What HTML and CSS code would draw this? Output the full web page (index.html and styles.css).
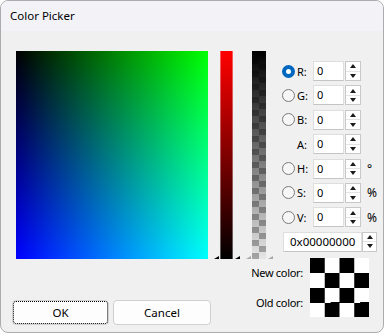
FILE: index.html
```html
<!DOCTYPE html>
<html lang="en">
<head>
    <meta charset="UTF-8">
    <title>Color Picker</title>
    <link rel="stylesheet" href="styles.css">
</head>
<body>
    <div class="window">
        <div class="titlebar">Color Picker</div>
        <div class="content">
            <div class="top">
                <div class="plane"></div>
                <div class="bar red"><span class="mark left"></span><span class="mark right"></span></div>
                <div class="bar alpha"><span class="mark left"></span><span class="mark right"></span></div>
                <div class="fields">
                    <div class="row"><span class="radio on"></span><span class="lbl">R:</span><div class="num">0</div><div class="spin"><i class="up"></i><i class="down"></i></div></div>
                    <div class="row"><span class="radio"></span><span class="lbl">G:</span><div class="num">0</div><div class="spin"><i class="up"></i><i class="down"></i></div></div>
                    <div class="row"><span class="radio"></span><span class="lbl">B:</span><div class="num">0</div><div class="spin"><i class="up"></i><i class="down"></i></div></div>
                    <div class="row"><span class="radio none"></span><span class="lbl">A:</span><div class="num">0</div><div class="spin"><i class="up"></i><i class="down"></i></div></div>
                    <div class="row"><span class="radio"></span><span class="lbl">H:</span><div class="num">0</div><div class="spin"><i class="up"></i><i class="down"></i></div><span class="unit">°</span></div>
                    <div class="row"><span class="radio"></span><span class="lbl">S:</span><div class="num">0</div><div class="spin"><i class="up"></i><i class="down"></i></div><span class="unit">%</span></div>
                    <div class="row"><span class="radio"></span><span class="lbl">V:</span><div class="num">0</div><div class="spin"><i class="up"></i><i class="down"></i></div><span class="unit">%</span></div>
                    <div class="row hex"><div class="num">0x00000000</div><div class="spin"><i class="up"></i><i class="down"></i></div></div>
                </div>
            </div>
            <div class="bottom">
                <div class="buttons">
                    <button class="btn default">OK</button>
                    <button class="btn">Cancel</button>
                </div>
                <div class="swatches">
                    <span class="swatch-label">New color:</span>
                    <div class="swatch"></div>
                    <span class="swatch-label">Old color:</span>
                    <div class="swatch"></div>
                </div>
            </div>
        </div>
    </div>
</body>
</html>
```

FILE: styles.css
```css
html {
    background: #fff;
}

body {
    margin: 0;
    font-family: 'Noto Sans', 'Open Sans', sans-serif;
    font-size: 11px;
    color: #000;
}

.window {
    width: 384px;
    height: 333px;
    box-sizing: border-box;
    border: 1px solid #acacac;
    border-radius: 8px;
    background: #f0f0f0;
    overflow: hidden;
}

.titlebar {
    height: 30px;
    line-height: 30px;
    padding-left: 9px;
    font-size: 11.5px;
    background: #f2f2f7;
}

.content {
    padding: 20px 0 0 11px;
}

.top {
    display: flex;
    align-items: flex-start;
}

.top > * {
    flex-shrink: 0;
}

.plane {
    margin-left: 4px;
    width: 192px;
    height: 208px;
    background: linear-gradient(to right, #000, #00ff00), linear-gradient(to bottom, #000, #0000ff);
    background-blend-mode: screen;
}

.bar {
    position: relative;
    height: 208px;
}

.bar.red {
    margin-left: 12px;
    width: 13px;
    background: linear-gradient(to bottom, #ff0000, #000);
    box-shadow: inset 1px 0 rgba(255, 255, 255, 0.35), inset -1px 0 rgba(255, 255, 255, 0.35);
}

.bar.alpha {
    margin-left: 19px;
    width: 14px;
    background:
        linear-gradient(to bottom, #000, rgba(0, 0, 0, 0)),
        conic-gradient(#a4a4a4 0 25%, #e6e6e6 0 50%, #a4a4a4 0 75%, #e6e6e6 0);
    background-size: 100% 100%, 14px 13px;
    background-position: 0 0, left bottom;
}

.mark {
    position: absolute;
    bottom: 0;
    width: 0;
    height: 0;
    border-left: 5px solid transparent;
    border-bottom: 3px solid #000;
}

.mark.left {
    left: -6px;
}

.mark.right {
    right: -7px;
}

.alpha .mark {
    border-bottom-color: #a8a8a8;
}

.fields {
    margin-left: 16px;
    padding-top: 10px;
    display: flex;
    flex-direction: column;
    gap: 4.4px;
}

.row {
    display: flex;
    align-items: center;
    height: 20px;
}

.radio {
    width: 13px;
    height: 13px;
    box-sizing: border-box;
    border-radius: 50%;
    border: 1px solid #7a7a7a;
    background: #f6f6f6;
    margin-right: 2px;
}

.radio.on {
    border: 4px solid #0067c0;
    background: #fff;
}

.radio.none {
    visibility: hidden;
}

.lbl {
    width: 16px;
}

.num {
    width: 31px;
    height: 20px;
    box-sizing: border-box;
    border: 1px solid #dedede;
    border-bottom-color: #c4c4c4;
    background: #fff;
    padding-left: 3px;
    line-height: 18px;
}

.spin {
    margin-left: 1px;
    width: 16px;
    height: 20px;
    box-sizing: border-box;
    border: 1px solid #c8c8c8;
    background: #fff;
    display: flex;
    flex-direction: column;
}

.spin i {
    flex: 1;
    display: flex;
    align-items: center;
    justify-content: center;
}

.spin i.down {
    border-top: 1px solid #e4e4e4;
}

.spin i::before {
    content: '';
    width: 0;
    height: 0;
    border-left: 3.5px solid transparent;
    border-right: 3.5px solid transparent;
}

.spin i.up::before {
    border-bottom: 4px solid #1a1a1a;
}

.spin i.down::before {
    border-top: 4px solid #1a1a1a;
}

.unit {
    margin-left: 6px;
    font-size: 12px;
}

.row.hex {
    margin-left: 1px;
}

.row.hex .num {
    width: 79px;
    padding-left: 6px;
    font-size: 11.5px;
}

.row.hex .spin {
    margin-left: 0;
    width: 15px;
}

.bottom {
    margin-top: -1px;
    display: flex;
    justify-content: space-between;
    align-items: flex-start;
}

.buttons {
    margin-top: 42px;
    display: flex;
    gap: 4px;
}

.btn {
    height: 25px;
    border: 1px solid #d0d0d0;
    border-radius: 4px;
    background: #fdfdfd;
    font-family: inherit;
    font-size: 11.5px;
    color: #000;
    padding: 0;
}

.btn.default {
    width: 97px;
    outline: 1px dotted #000;
    outline-offset: -2px;
}

.btn:not(.default) {
    width: 98px;
}

.swatches {
    margin-right: 14px;
    display: grid;
    grid-template-columns: auto 59px;
    grid-template-rows: 29.5px 29.5px;
    column-gap: 7px;
    align-items: center;
}

.swatch-label {
    justify-self: end;
    letter-spacing: -0.3px;
}

.swatch {
    width: 59px;
    height: 29.5px;
    background: conic-gradient(#fff 0 25%, #000 0 50%, #fff 0 75%, #000 0);
    background-size: 29.5px 29.5px;
}
```
